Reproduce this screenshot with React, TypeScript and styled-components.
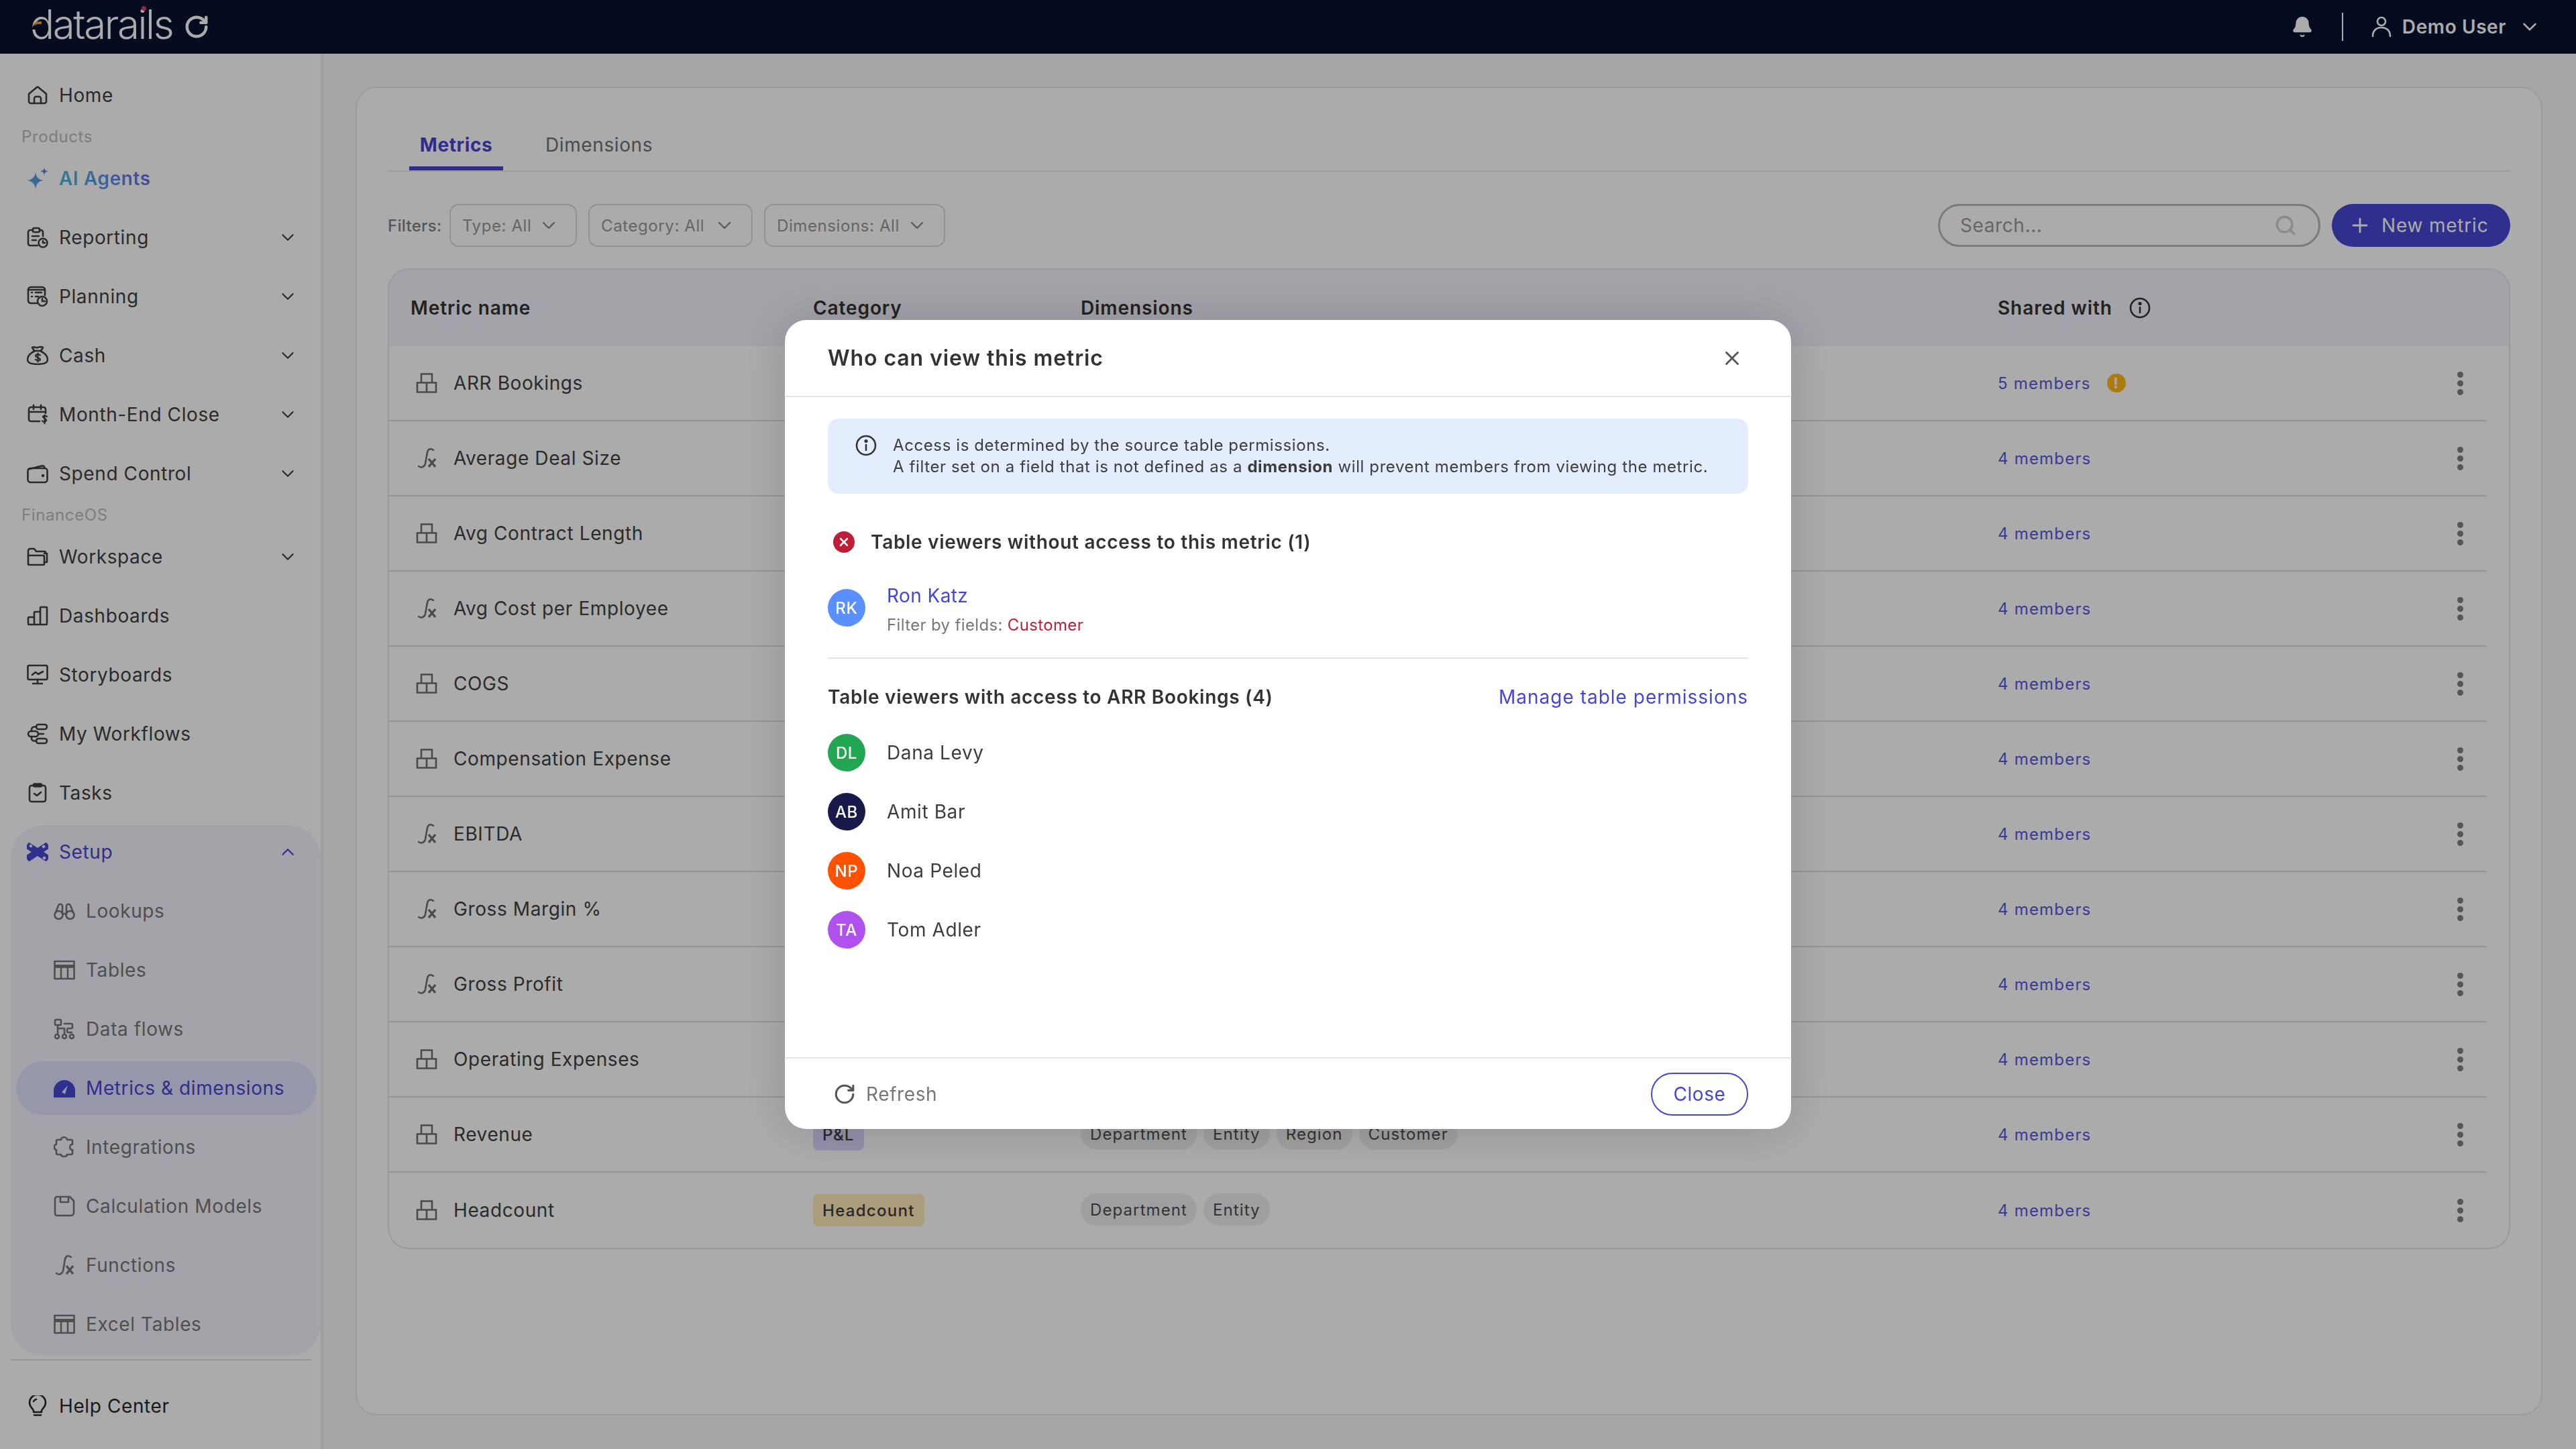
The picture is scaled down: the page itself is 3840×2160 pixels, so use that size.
import { ReactElement, ReactNode } from "react";
import styled, { createGlobalStyle } from "styled-components";
import { Bell, ChevronDown, ChevronUp, Plus, RotateCw, Search, X } from "lucide-react";

const GlobalStyle = createGlobalStyle`
  * { box-sizing: border-box; }
  html, body { margin: 0; padding: 0; }
  body {
    font-family: "Inter", "Liberation Sans", sans-serif;
    font-size: 28px;
    letter-spacing: 0.6px;
    color: #404040;
  }
`;

const Svg = ({ children }: { children: ReactNode }) => (
  <svg width="32" height="32" viewBox="0 0 32 32" fill="none" stroke="currentColor" strokeWidth="2.6" strokeLinecap="round" strokeLinejoin="round">
    {children}
  </svg>
);

const icons: Record<string, ReactElement> = {
  home: (
    <Svg>
      <path d="M3 14 15 4a1.5 1.5 0 0 1 2 0l12 10v11a3 3 0 0 1-3 3H6a3 3 0 0 1-3-3Z" />
      <path d="M11 28v-7a3 3 0 0 1 3-3h4a3 3 0 0 1 3 3v7" />
    </Svg>
  ),
  reporting: (
    <Svg>
      <path d="M9 5H5a3 3 0 0 0-3 3v17a3 3 0 0 0 3 3h11M19 5h2a3 3 0 0 1 3 3v6" />
      <rect x="9" y="2" width="10" height="6" rx="2" />
      <path d="M8 14h10M8 20h6" />
      <circle cx="24" cy="24" r="6.5" />
      <path d="M24 21v3h3" />
    </Svg>
  ),
  planning: (
    <Svg>
      <path d="M15 26H6a4 4 0 0 1-4-4V6a4 4 0 0 1 4-4h17a4 4 0 0 1 4 4v8" />
      <path d="M7 10h1M13 10h9M7 16h1M13 16h4M2 6h25" />
      <circle cx="23" cy="23" r="7" />
      <path d="M23 19v4h4" />
    </Svg>
  ),
  cash: (
    <Svg>
      <path d="M11 9 8 4c3-2 5 1 8 0s5-2 8 0l-3 5Z" />
      <path d="M12 9C6 12 1 17 1 22c0 5 6 7 15 7s15-2 15-7c0-5-5-10-11-13" />
      <path d="M20 15.5c-1-1-6-2-7 .5s6 3 7 5.500-5 2.500-7 .5M16.500 12.500v13" strokeWidth="2.2" />
    </Svg>
  ),
  month: (
    <Svg>
      <path d="M19 26H6a3 3 0 0 1-3-3V8a3 3 0 0 1 3-3h19a3 3 0 0 1 3 3v6" />
      <path d="M3 12h25M10 2v6M21 2v6" />
      <path d="M30 19c-1-1-5-2-6 0s6 3 5 6-5 2-6 .5M26.500 16.500v13" strokeWidth="2.2" />
    </Svg>
  ),
  spend: (
    <Svg>
      <path d="M1.500 12a4 4 0 0 1 4-4h21a4 4 0 0 1 4 4v13a4 4 0 0 1-4 4h-21a4 4 0 0 1-4-4Z" />
      <path d="M2.500 9.500 22 4.500c3-.7 4.500 1 4.500 3.500" />
      <circle cx="24" cy="19" r="1" fill="currentColor" />
    </Svg>
  ),
  workspace: (
    <Svg>
      <path d="M2 27V7a3 3 0 0 1 3-3h6l3 4h12a2 2 0 0 1 2 2v1" />
      <path d="M2 14h22a2 2 0 0 1 2 2v11a1 1 0 0 1-1 1H3a1 1 0 0 1-1-1" />
      <path d="M26 11h4v13h-4" />
    </Svg>
  ),
  dashboards: (
    <Svg>
      <path d="M2 19a1 1 0 0 1 1-1h8v11H3a1 1 0 0 1-1-1ZM11 11a1 1 0 0 1 1-1h8v19h-9ZM20 4a1 1 0 0 1 1-1h8a1 1 0 0 1 1 1v24a1 1 0 0 1-1 1h-9Z" />
    </Svg>
  ),
  storyboards: (
    <Svg>
      <rect x="1.500" y="2" width="29" height="21" rx="2" />
      <path d="M16 23v6M9 29h14M8 16l5-4 4 3 7-4" />
    </Svg>
  ),
  workflows: (
    <Svg>
      <rect x="14" y="2" width="16" height="7" rx="3.500" />
      <rect x="14" y="23" width="16" height="7" rx="3.500" />
      <rect x="2" y="12" width="15" height="8" rx="4" />
      <path d="M14 5.500h-3a4 4 0 0 0-4 4V12M14 26.500h-3a4 4 0 0 1-4-4V20M17 16h8" />
    </Svg>
  ),
  tasks: (
    <Svg>
      <path d="M9 5H7a3 3 0 0 0-3 3v18a3 3 0 0 0 3 3h18a3 3 0 0 0 3-3V8a3 3 0 0 0-3-3h-2" />
      <rect x="10" y="2.500" width="12" height="4" rx="1.500" fill="currentColor" />
      <path d="m11 17 4 3 6-5" />
    </Svg>
  ),
  setup: (
    <svg width="32" height="32" viewBox="0 0 32 32" fill="currentColor">
      <rect x="-3" y="11" width="38" height="10" rx="2" transform="rotate(33 16 16)" />
      <rect x="-3" y="11" width="38" height="10" rx="2" transform="rotate(-33 16 16)" />
      <rect x="4" y="5" width="4" height="4" fill="#f5f4fc" transform="rotate(33 6 7)" />
      <rect x="24" y="23" width="4" height="4" fill="#f5f4fc" transform="rotate(33 26 25)" />
      <rect x="23" y="6" width="4" height="4" fill="#f5f4fc" transform="rotate(-33 25 8)" />
    </svg>
  ),
  lookups: (
    <Svg>
      <circle cx="7.500" cy="22" r="6" />
      <circle cx="24.500" cy="22" r="6" />
      <path d="M3 18 7 8c1-3 5-3 6 0v12h6V8c1-3 5-3 6 0l4 10M13 20a6 6 0 0 1 .5 2M19 20a6 6 0 0 0-.5 2" />
    </Svg>
  ),
  tables: (
    <Svg>
      <path d="M1.500 3h29v26h-29Z" />
      <path d="M1.500 10.500h29" strokeWidth="5" strokeLinecap="butt" />
      <path d="M11 12v17M21 12v17" />
    </Svg>
  ),
  dataflows: (
    <Svg>
      <rect x="2" y="2" width="9" height="8" rx="1.500" />
      <circle cx="5" cy="27" r="3" />
      <circle cx="16" cy="27" r="3" />
      <circle cx="27" cy="27" r="3" />
      <path d="M6 10v14M6 15h10v9M16 8h10a2 2 0 0 1 2 2v3a2 2 0 0 1-2 2h-4a2 2 0 0 0-2 2v2a2 2 0 0 0 2 2h5" />
    </Svg>
  ),
  metrics: (
    <svg width="32" height="32" viewBox="0 0 32 32" fill="currentColor">
      <path d="M0 30V20a16 16 0 0 1 32 0v10Z" />
      <path d="m12 22 9-10-4 13Z" fill="#e2e2ff" />
    </svg>
  ),
  integrations: (
    <Svg>
      <path d="M11 5c0-5 9-5 9 0h6a2 2 0 0 1 2 2v5c-5-1-5 9 0 8v5a2 2 0 0 1-2 2h-6c0 4-9 4-9 0H6a2 2 0 0 1-2-2v-5c-4 1-4-9 0-8V7a2 2 0 0 1 2-2Z" />
    </Svg>
  ),
  calculation: (
    <Svg>
      <path d="M5 2h19l6 6v18a4 4 0 0 1-4 4H5a3 3 0 0 1-3-3V5a3 3 0 0 1 3-3Z" />
      <path d="M10 2v8h12V2" />
    </Svg>
  ),
  fx: (
    <Svg>
      <path d="M26 4c-4-3-8-2-9 3l-3 17c-1 5-6 7-10 4" strokeWidth="2.6" />
      <path d="m19 17 10 12M29 17 19 29" strokeWidth="3.4" strokeLinecap="butt" />
    </Svg>
  ),
  help: (
    <Svg>
      <path d="M10 25v-2c0-3-6-5-6-12a12 12 0 0 1 24 0c0 7-6 9-6 12v2Z" />
      <path d="M11 29.500h10M10 9a6 6 0 0 1 4-3" />
    </Svg>
  ),
  cube: (
    <Svg>
      <path d="M8 2.500h16v13H8ZM2 15.500h28v14H2ZM16 15.500v14" strokeLinecap="butt" strokeLinejoin="miter" />
    </Svg>
  ),
};

const Page = styled.div`
  width: 100vw;
  height: 100vh;
  overflow: hidden;
  display: flex;
  flex-direction: column;
  background: #f8f8f8;
`;

const TopBar = styled.header`
  height: 80px;
  flex: none;
  display: flex;
  align-items: center;
  padding: 0 52px 0 45px;
  background: #08122f;
  color: #ffffff;
`;

const Logo = styled.div`
  position: relative;
  font-size: 60px;
  font-weight: 300;
  letter-spacing: -2.4px;
  line-height: 80px;
  margin-top: -8px;
  color: #ffffff;

  &::before {
    content: "";
    position: absolute;
    left: 3px;
    top: 36px;
    width: 14px;
    height: 8px;
    background: #08122f;
    border-top: 4px solid #f39a1c;
    border-radius: 10px 0 0 0;
  }

  &::after {
    content: "";
    position: absolute;
    left: 166px;
    top: 13px;
    width: 7px;
    height: 7px;
    border-radius: 50%;
    background: #f0306f;
  }
`;

const LogoRefresh = styled.span`
  display: flex;
  margin-left: 17px;
  color: #ffffff;
`;

const BarRight = styled.div`
  margin-left: auto;
  display: flex;
  align-items: center;
`;

const BarDivider = styled.span`
  width: 2px;
  height: 42px;
  margin: 0 42px;
  background: #ffffff;
`;

const UserName = styled.span`
  margin: 0 18px 0 16px;
  font-size: 28px;
  font-weight: 600;
`;

const Body = styled.div`
  flex: 1;
  min-height: 0;
  display: flex;
`;

const Sidebar = styled.nav`
  width: 482px;
  flex: none;
  display: flex;
  flex-direction: column;
  padding-top: 18px;
  background: #ffffff;
  border-right: 4px solid #ececec;
`;

const NavRow = styled.div<{ $tone?: "default" | "accent" | "help"; $sub?: boolean; $inset?: boolean }>`
  height: 88px;
  flex: none;
  display: flex;
  align-items: center;
  gap: 16px;
  padding: 0 34px 0 ${(p) => (p.$sub ? 64 : p.$inset ? 24 : 40)}px;
  font-size: 28px;
  color: ${(p) => (p.$tone === "accent" ? "#4646d2" : p.$sub ? "#767678" : p.$tone === "help" ? "#272727" : "#3f3f3f")};
`;

const ActiveRow = styled(NavRow)`
  height: 80px;
  margin: 4px 6px 4px 8px;
  padding-left: 56px;
  border-radius: 40px;
  background: #e2e2ff;
`;

const NavIcon = styled.span`
  width: 32px;
  height: 32px;
  flex: none;
  display: flex;
  align-items: center;
  justify-content: center;
`;

const NavChevron = styled.span`
  margin-left: auto;
  display: flex;
`;

const AgentsRow = styled(NavRow)`
  font-weight: 600;
`;

const AgentsText = styled.span`
  background: linear-gradient(90deg, #4bb9d6, #6a6cf0);
  -webkit-background-clip: text;
  background-clip: text;
  color: transparent;
`;

const NavLabel = styled.div`
  height: 36px;
  flex: none;
  padding-left: 32px;
  font-size: 24px;
  line-height: 36px;
  color: #bcbcbc;
`;

const SetupGroup = styled.div`
  margin: 4px 0 0 16px;
  padding-bottom: 3px;
  border-radius: 48px;
  background: #f5f4fc;

  > :first-child {
    margin-top: -4px;
  }
`;

const NavRule = styled.div`
  height: 2px;
  flex: none;
  margin: 5px 14px 0 16px;
  background: #e2e2e2;
`;

const HelpRow = styled(NavRow)`
  margin-top: 24px;
`;

const Main = styled.main`
  flex: 1;
  min-width: 0;
  padding: 49px 50px 50px 48px;
`;

const Card = styled.section`
  height: 100%;
  padding: 45px 46px 0;
  border: 2px solid #e8e8e8;
  border-radius: 32px;
  background: #ffffff;
`;

const Tabs = styled.div`
  height: 80px;
  display: flex;
  gap: 47px;
  padding-left: 32px;
  border-bottom: 2px solid #e5ebf5;
`;

const Tab = styled.div<{ $active?: boolean }>`
  width: ${(p) => (p.$active ? 140 : 194)}px;
  display: flex;
  align-items: center;
  justify-content: ${(p) => (p.$active ? "center" : "flex-start")};
  padding: 8px ${(p) => (p.$active ? 0 : 16)}px 0;
  border-bottom: 6px solid ${(p) => (p.$active ? "#4645d1" : "transparent")};
  font-size: 28px;
  font-weight: ${(p) => (p.$active ? 700 : 400)};
  color: ${(p) => (p.$active ? "#4645d1" : "#707076")};
`;

const Toolbar = styled.div`
  height: 64px;
  margin-top: 48px;
  display: flex;
  align-items: center;
`;

const FilterLabel = styled.span`
  width: 92px;
  font-size: 24px;
  font-weight: 500;
  letter-spacing: 0.3px;
  color: #808080;
`;

const Select = styled.div<{ $width: number }>`
  width: ${(p) => p.$width}px;
  height: 64px;
  display: flex;
  align-items: center;
  margin-right: 17px;
  padding: 0 24px 0 17px;
  border: 2px solid #dadada;
  border-radius: 14px;
  font-size: 24px;
  color: #979797;

  svg {
    margin-left: auto;
    color: #888888;
  }
`;

const SearchBox = styled.div`
  width: 570px;
  height: 64px;
  margin-left: auto;
  display: flex;
  align-items: center;
  padding: 0 32px 0 30px;
  border: 3px solid #b6b6b6;
  border-radius: 32px;
  color: #cfcfcf;
`;

const SearchInput = styled.input`
  flex: 1;
  min-width: 0;
  padding: 0;
  border: 0;
  outline: 0;
  background: none;
  font: inherit;
  font-size: 28px;
  letter-spacing: 0.6px;

  &::placeholder {
    color: #989898;
    opacity: 1;
  }
`;

const NewButton = styled.button`
  width: 266px;
  height: 64px;
  margin-left: 17px;
  display: flex;
  align-items: center;
  gap: 15px;
  padding: 0 0 0 25px;
  border: 0;
  border-radius: 32px;
  background: #4646d2;
  color: #ffffff;
  font: inherit;
  font-size: 28px;
  letter-spacing: 0.8px;
`;

const Table = styled.div`
  margin-top: 32px;
  border: 2px solid #e6e6e6;
  border-radius: 32px;
  overflow: hidden;
`;

const HeaderRow = styled.div`
  height: 114px;
  display: grid;
  grid-template-columns: 600px 399px 1367px 1fr;
  align-items: center;
  padding-left: 32px;
  background: #f3f3fc;
  font-size: 28px;
  font-weight: 600;
  letter-spacing: 0.9px;
  color: #333333;
`;

const SharedHead = styled.span`
  display: flex;
  align-items: center;
  gap: 25px;
  color: #333333;
`;

const TableRow = styled.div`
  height: 112px;
  display: grid;
  grid-template-columns: 600px 399px 1367px 672px 34px;
  align-items: center;
  margin-right: 33px;
  padding-left: 32px;
  border-bottom: 2px solid #dfdfdf;
  font-size: 28px;
  color: #404040;

  &:last-child {
    border-bottom: 0;
  }
`;

const NameCell = styled.div`
  display: flex;
  align-items: center;
  gap: 24px;
  padding-left: 8px;

  svg {
    color: #6f6f6f;
  }
`;

const CategoryTag = styled.span<{ $bg: string }>`
  justify-self: start;
  height: 48px;
  padding: 0 14px;
  display: flex;
  align-items: center;
  border-radius: 8px;
  background: ${(p) => p.$bg};
  font-size: 24px;
  font-weight: 500;
  letter-spacing: 1.3px;
  color: #3c3c3c;
`;

const Chips = styled.div`
  display: flex;
  gap: 10px;
  margin-top: -2px;
`;

const Chip = styled.span`
  height: 48px;
  padding: 0 14px;
  display: flex;
  align-items: center;
  border-radius: 24px;
  background: #eeeef0;
  font-size: 24px;
  letter-spacing: 1.1px;
  color: #4c4c4c;
`;

const Members = styled.span`
  display: flex;
  align-items: center;
  gap: 24px;
  font-size: 24px;
  letter-spacing: 1.2px;
  color: #5957e0;
`;

const WarnDot = styled.span`
  width: 28px;
  height: 28px;
  display: flex;
  align-items: center;
  justify-content: center;
  border-radius: 50%;
  background: #ffb914;
  color: #ffffff;
  font-size: 22px;
  font-weight: 700;
`;

const Dots = styled.span`
  display: flex;
  flex-direction: column;
  align-items: center;
  gap: 4px;

  i {
    width: 9px;
    height: 9px;
    border-radius: 50%;
    background: #808080;
  }
`;

const Overlay = styled.div`
  position: fixed;
  inset: 0;
  display: flex;
  align-items: center;
  justify-content: center;
  background: rgba(0, 0, 0, 0.33);
`;

const Modal = styled.div`
  width: 1500px;
  height: 1206px;
  display: flex;
  flex-direction: column;
  border-radius: 32px;
  background: #ffffff;
  box-shadow: 0 0 70px rgba(0, 0, 0, 0.16);
`;

const ModalHeader = styled.div`
  height: 115px;
  flex: none;
  display: flex;
  align-items: center;
  justify-content: space-between;
  padding: 0 71px 0 64px;
  border-bottom: 2px solid #e2e2ea;

  svg {
    color: #555555;
  }
`;

const ModalTitle = styled.h2`
  margin: 0;
  font-size: 32px;
  font-weight: 600;
  letter-spacing: 0.9px;
  color: #333333;
`;

const ModalBody = styled.div`
  flex: 1;
  padding: 32px 64px 0;
`;

const InfoBox = styled.div`
  height: 112px;
  display: flex;
  gap: 24px;
  padding: 24px 0 0 41px;
  border-radius: 16px;
  background: #e4edfd;
  font-size: 24px;
  line-height: 32px;
  color: #3d3d3d;

  svg {
    flex: none;
    color: #333333;
  }

  b {
    font-weight: 700;
  }
`;

const SectionHead = styled.div<{ $space?: boolean; $top: number }>`
  height: 40px;
  margin-top: ${(p) => p.$top}px;
  display: flex;
  align-items: center;
  gap: 24px;
  justify-content: ${(p) => (p.$space ? "space-between" : "flex-start")};
  padding-left: ${(p) => (p.$space ? 0 : 8)}px;
  font-size: 28px;
  font-weight: 600;
  letter-spacing: 0.7px;
  color: #333333;
`;

const ErrorDot = styled.span`
  width: 32px;
  height: 32px;
  flex: none;
  display: flex;
  align-items: center;
  justify-content: center;
  border-radius: 50%;
  background: #be1e37;
  color: #ffffff;
`;

const ManageLink = styled.a`
  font-size: 28px;
  font-weight: 400;
  letter-spacing: 1px;
  color: #4646d2;
`;

const BlockedRow = styled.div`
  margin-top: 40px;
  display: flex;
  gap: 32px;
`;

const Avatar = styled.span<{ $bg: string }>`
  width: 56px;
  height: 56px;
  flex: none;
  display: flex;
  align-items: center;
  justify-content: center;
  border-radius: 50%;
  background: ${(p) => p.$bg};
  color: #ffffff;
  font-size: 24px;
  font-weight: 500;
`;

const BlockedAvatar = styled(Avatar)`
  margin-top: 10px;
`;

const BlockedName = styled.div`
  font-size: 28px;
  line-height: 40px;
  letter-spacing: 0.4px;
  color: #4646d2;
`;

const BlockedFields = styled.div`
  margin-top: 6px;
  font-size: 24px;
  line-height: 36px;
  letter-spacing: 0.35px;
  color: #777777;

  span {
    color: #be1e37;
  }
`;

const Rule = styled.div`
  height: 2px;
  margin-top: 30px;
  background: #e2e2ea;
`;

const People = styled.div`
  margin-top: 19px;
`;

const Person = styled.div`
  height: 88px;
  display: flex;
  align-items: center;
  gap: 32px;
  font-size: 28px;
  color: #3d3d3d;
`;

const ModalFooter = styled.div`
  height: 107px;
  flex: none;
  display: flex;
  align-items: center;
  justify-content: space-between;
  padding: 0 64px 0 72px;
  border-top: 2px solid #e2e2ea;
`;

const RefreshLink = styled.span`
  display: flex;
  align-items: center;
  gap: 15px;
  font-size: 28px;
  color: #777777;

  svg {
    color: #555555;
  }
`;

const CloseButton = styled.button`
  width: 145px;
  height: 64px;
  border: 2px solid #4646d2;
  border-radius: 32px;
  background: #ffffff;
  color: #4646d2;
  font: inherit;
  font-size: 28px;
  letter-spacing: 0.6px;
`;

const InfoIcon = () => (
  <svg width="32" height="32" viewBox="0 0 32 32" fill="none" stroke="currentColor" strokeWidth="2.6" strokeLinecap="round">
    <circle cx="16" cy="16" r="14" />
    <path d="M16 15v8" />
    <circle cx="16" cy="9.500" r="1.300" fill="currentColor" />
  </svg>
);

const Sparkle = () => (
  <svg width="32" height="32" viewBox="0 0 32 32">
    <defs>
      <linearGradient id="ai" x1="0" y1="1" x2="1" y2="0">
        <stop offset="0" stopColor="#4bb9d6" />
        <stop offset="1" stopColor="#6a6cf0" />
      </linearGradient>
    </defs>
    <path fill="url(#ai)" d="M13 7c1 7 4 11 12 12-8 1-11 5-12 13-1-8-5-12-13-13 8-1 12-5 13-12ZM26 0c.5 3 2 4.500 6 5.500-4 .5-5.500 2-6 6-.5-4-2-5.500-6-6 4-1 5.500-2.500 6-5.500Z" />
  </svg>
);

type NavItem = { key: string; label: string; chevron?: boolean };

const topItems: NavItem[] = [
  { key: "reporting", label: "Reporting", chevron: true },
  { key: "planning", label: "Planning", chevron: true },
  { key: "cash", label: "Cash", chevron: true },
  { key: "month", label: "Month-End Close", chevron: true },
  { key: "spend", label: "Spend Control", chevron: true },
];

const osItems: NavItem[] = [
  { key: "workspace", label: "Workspace", chevron: true },
  { key: "dashboards", label: "Dashboards" },
  { key: "storyboards", label: "Storyboards" },
  { key: "workflows", label: "My Workflows" },
  { key: "tasks", label: "Tasks" },
];

const subBefore: NavItem[] = [
  { key: "lookups", label: "Lookups" },
  { key: "tables", label: "Tables" },
  { key: "dataflows", label: "Data flows" },
];

const subAfter: NavItem[] = [
  { key: "integrations", label: "Integrations" },
  { key: "calculation", label: "Calculation Models" },
  { key: "fx", label: "Functions" },
  { key: "tables", label: "Excel Tables" },
];

const metrics = [
  { name: "ARR Bookings", icon: "cube", members: "5 members", warn: true },
  { name: "Average Deal Size", icon: "fx" },
  { name: "Avg Contract Length", icon: "cube" },
  { name: "Avg Cost per Employee", icon: "fx" },
  { name: "COGS", icon: "cube" },
  { name: "Compensation Expense", icon: "cube" },
  { name: "EBITDA", icon: "fx" },
  { name: "Gross Margin %", icon: "fx" },
  { name: "Gross Profit", icon: "fx" },
  { name: "Operating Expenses", icon: "cube" },
  { name: "Revenue", icon: "cube", category: "P&L", tagBg: "#dcd7ff", dims: ["Department", "Entity", "Region", "Customer"] },
  { name: "Headcount", icon: "cube", category: "Headcount", tagBg: "#ffe9b8", dims: ["Department", "Entity"] },
];

const people = [
  { initials: "DL", name: "Dana Levy", bg: "#22a652" },
  { initials: "AB", name: "Amit Bar", bg: "#181a4c" },
  { initials: "NP", name: "Noa Peled", bg: "#ff5200" },
  { initials: "TA", name: "Tom Adler", bg: "#b050ee" },
];

const App = (): ReactElement => {
  return (
    <Page>
      <GlobalStyle />
      <TopBar>
        <Logo>datarails</Logo>
        <LogoRefresh>
          <RotateCw size={38} strokeWidth={2.8} />
        </LogoRefresh>
        <BarRight>
          <Bell size={34} fill="#ffffff" strokeWidth={1.5} />
          <BarDivider />
          <svg width="30" height="32" viewBox="0 0 30 32" fill="none" stroke="#ffffff" strokeWidth="2.6" strokeLinecap="round">
            <circle cx="15" cy="8" r="6" />
            <path d="M2 30c0-8 5-13 13-13s13 5 13 13" />
          </svg>
          <UserName>Demo User</UserName>
          <ChevronDown size={34} strokeWidth={1.8} />
        </BarRight>
      </TopBar>

      <Body>
        <Sidebar>
          <NavRow>
            <NavIcon>{icons.home}</NavIcon>
            Home
          </NavRow>
          <NavLabel>Products</NavLabel>
          <AgentsRow>
            <NavIcon>
              <Sparkle />
            </NavIcon>
            <AgentsText>AI Agents</AgentsText>
          </AgentsRow>
          {topItems.map((item) => (
            <NavRow key={item.key}>
              <NavIcon>{icons[item.key]}</NavIcon>
              {item.label}
              <NavChevron>
                <ChevronDown size={30} strokeWidth={1.8} />
              </NavChevron>
            </NavRow>
          ))}
          <NavLabel>FinanceOS</NavLabel>
          {osItems.map((item) => (
            <NavRow key={item.key}>
              <NavIcon>{icons[item.key]}</NavIcon>
              {item.label}
              {item.chevron && (
                <NavChevron>
                  <ChevronDown size={30} strokeWidth={1.8} />
                </NavChevron>
              )}
            </NavRow>
          ))}
          <SetupGroup>
            <NavRow $inset $tone="accent">
              <NavIcon>{icons.setup}</NavIcon>
              Setup
              <NavChevron>
                <ChevronUp size={30} strokeWidth={1.8} />
              </NavChevron>
            </NavRow>
            {subBefore.map((item) => (
              <NavRow $sub key={item.label}>
                <NavIcon>{icons[item.key]}</NavIcon>
                {item.label}
              </NavRow>
            ))}
            <ActiveRow $tone="accent">
              <NavIcon>{icons.metrics}</NavIcon>
              Metrics &amp; dimensions
            </ActiveRow>
            {subAfter.map((item) => (
              <NavRow $sub key={item.label}>
                <NavIcon>{icons[item.key]}</NavIcon>
                {item.label}
              </NavRow>
            ))}
          </SetupGroup>
          <NavRule />
          <HelpRow $tone="help">
            <NavIcon>{icons.help}</NavIcon>
            Help Center
          </HelpRow>
        </Sidebar>

        <Main>
          <Card>
            <Tabs>
              <Tab $active>Metrics</Tab>
              <Tab>Dimensions</Tab>
            </Tabs>
            <Toolbar>
              <FilterLabel>Filters:</FilterLabel>
              <Select $width={190}>
                Type: All
                <ChevronDown size={32} strokeWidth={1.8} />
              </Select>
              <Select $width={245}>
                Category: All
                <ChevronDown size={32} strokeWidth={1.8} />
              </Select>
              <Select $width={270}>
                Dimensions: All
                <ChevronDown size={32} strokeWidth={1.8} />
              </Select>
              <SearchBox>
                <SearchInput placeholder="Search..." />
                <Search size={34} strokeWidth={2.4} />
              </SearchBox>
              <NewButton>
                <Plus size={34} strokeWidth={2} />
                New metric
              </NewButton>
            </Toolbar>

            <Table>
              <HeaderRow>
                <span>Metric name</span>
                <span>Category</span>
                <span>Dimensions</span>
                <SharedHead>
                  Shared with
                  <InfoIcon />
                </SharedHead>
              </HeaderRow>
              {metrics.map((metric) => (
                <TableRow key={metric.name}>
                  <NameCell>
                    {icons[metric.icon]}
                    {metric.name}
                  </NameCell>
                  {metric.category ? <CategoryTag $bg={metric.tagBg}>{metric.category}</CategoryTag> : <span />}
                  <Chips>
                    {metric.dims?.map((dim) => (
                      <Chip key={dim}>{dim}</Chip>
                    ))}
                  </Chips>
                  <Members>
                    {metric.members ?? "4 members"}
                    {metric.warn && <WarnDot>!</WarnDot>}
                  </Members>
                  <Dots>
                    <i />
                    <i />
                    <i />
                  </Dots>
                </TableRow>
              ))}
            </Table>
          </Card>
        </Main>
      </Body>

      <Overlay>
        <Modal>
          <ModalHeader>
            <ModalTitle>Who can view this metric</ModalTitle>
            <X size={34} strokeWidth={2} />
          </ModalHeader>
          <ModalBody>
            <InfoBox>
              <InfoIcon />
              <div>
                Access is determined by the source table permissions.
                <br />A filter set on a field that is not defined as a <b>dimension</b> will prevent members from viewing the metric.
              </div>
            </InfoBox>
            <SectionHead $top={52}>
              <ErrorDot>
                <X size={20} strokeWidth={3} />
              </ErrorDot>
              Table viewers without access to this metric (1)
            </SectionHead>
            <BlockedRow>
              <BlockedAvatar $bg="#5a8fff">RK</BlockedAvatar>
              <div>
                <BlockedName>Ron Katz</BlockedName>
                <BlockedFields>
                  Filter by fields: <span>Customer</span>
                </BlockedFields>
              </div>
            </BlockedRow>
            <Rule />
            <SectionHead $space $top={37}>
              Table viewers with access to ARR Bookings (4)
              <ManageLink>Manage table permissions</ManageLink>
            </SectionHead>
            <People>
              {people.map((person) => (
                <Person key={person.initials}>
                  <Avatar $bg={person.bg}>{person.initials}</Avatar>
                  {person.name}
                </Person>
              ))}
            </People>
          </ModalBody>
          <ModalFooter>
            <RefreshLink>
              <RotateCw size={34} strokeWidth={2.2} />
              Refresh
            </RefreshLink>
            <CloseButton>Close</CloseButton>
          </ModalFooter>
        </Modal>
      </Overlay>
    </Page>
  );
};

export default App;
